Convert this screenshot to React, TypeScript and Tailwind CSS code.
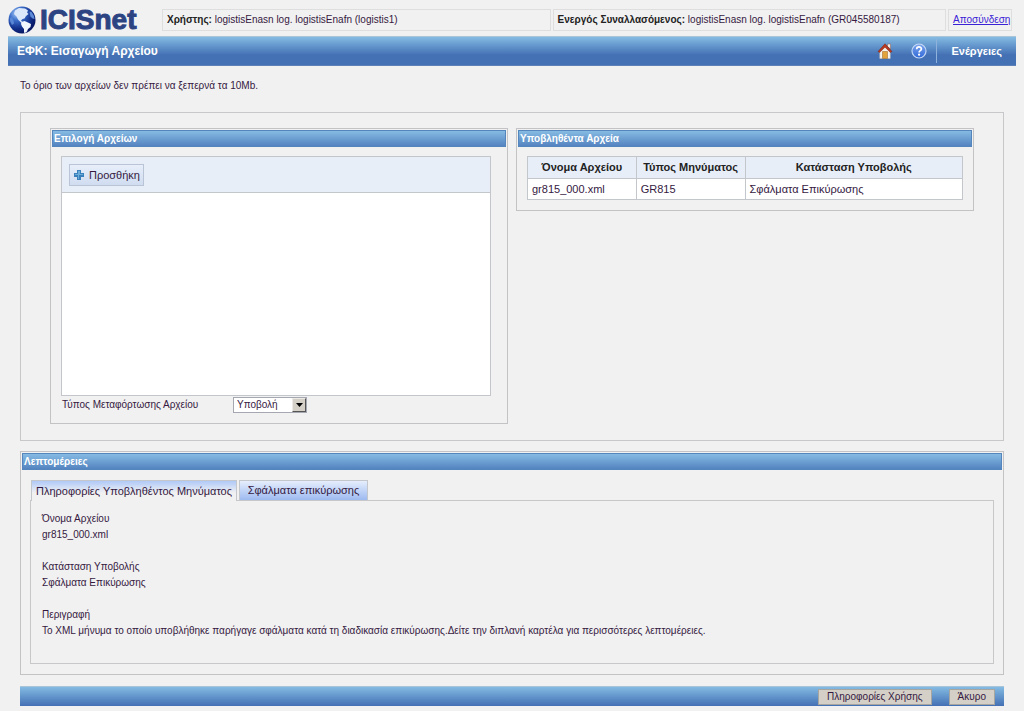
import { useState, type ReactNode } from "react";

const files = [
  { name: "gr815_000.xml", type: "GR815", status: "Σφάλματα Επικύρωσης" },
];

const details = [
  { label: "Όνομα Αρχείου", value: "gr815_000.xml" },
  { label: "Κατάσταση Υποβολής", value: "Σφάλματα Επικύρωσης" },
  {
    label: "Περιγραφή",
    value:
      "Το XML μήνυμα το οποίο υποβλήθηκε παρήγαγε σφάλματα κατά τη διαδικασία επικύρωσης.Δείτε την διπλανή καρτέλα για περισσότερες λεπτομέρειες.",
  },
];

function Globe() {
  return (
    <svg width="28" height="28" viewBox="0 0 28 28" aria-hidden="true">
      <defs>
        <radialGradient id="sea" cx="0.3" cy="0.25" r="0.75">
          <stop offset="0" stopColor="#a9c8f5" />
          <stop offset="0.35" stopColor="#3c6fcb" />
          <stop offset="0.75" stopColor="#12308c" />
          <stop offset="1" stopColor="#0a1a66" />
        </radialGradient>
        <clipPath id="ball">
          <circle cx="14" cy="14" r="13.5" />
        </clipPath>
      </defs>
      <circle cx="14" cy="14" r="13.5" fill="url(#sea)" />
      <g clipPath="url(#ball)">
        <path
          d="M7 4.500 11 2l6 .5 3 2-1 2 1.500 1.500-2.500 2-1.500 2.500-2 .5-1.500 1.500 1.500 1.500 1 1-2.500-.5-3-3-1.500-3L6 8z"
          fill="#dbe8fb"
        />
        <path
          d="M13.500 16l3-1 3.500 1.500 3 1.500-.5 3-2.500 2-1 2.500-2 1.500-1-.5v-3.500l-2-2.500-1-2.500z"
          fill="#f1f6fd"
        />
        <path d="M21.500 5.500l2 .5 2.500 4 .5 3-2-.5-2-2-.5-2z" fill="#5e8bd8" />
        <path d="M2 12l1.500-1 2 3 .5 3.500-2 1.500-2-4z" fill="#5a86d6" />
      </g>
    </svg>
  );
}

function HomeIcon() {
  return (
    <svg width="16" height="16" viewBox="0 0 16 16" aria-hidden="true">
      <path d="M10.500 1h3v5l-3-2.500z" fill="#f3ede6" stroke="#8d5a4a" strokeWidth="0.500" />
      <path d="M2.800 7.500 8 2.500l5.200 5v8H2.800z" fill="#f7f4ec" stroke="#cfc3b0" strokeWidth="0.500" />
      <path d="M1 8.500 8 .8l7 7.700-1.600 1L8 4.200 2.600 9.500z" fill="#b8391f" stroke="#7c2413" strokeWidth="0.500" />
      <path d="M5.500 8.500h5v7h-5z" fill="#e2a23c" stroke="#9a5f1c" strokeWidth="0.500" />
    </svg>
  );
}

function HelpIcon() {
  return (
    <svg width="16" height="16" viewBox="0 0 16 16" aria-hidden="true">
      <defs>
        <linearGradient id="help" x1="0" y1="0" x2="0" y2="1">
          <stop offset="0" stopColor="#7ea6ee" />
          <stop offset="1" stopColor="#2f68d8" />
        </linearGradient>
      </defs>
      <circle cx="8" cy="8" r="7" fill="url(#help)" stroke="#c4d8f5" strokeWidth="1.200" />
      <path d="M5.700 6.200c0-3 4.700-2.900 4.700-.2 0 1.700-2.300 1.700-2.300 3.500" fill="none" stroke="#fff" strokeWidth="1.700" />
      <circle cx="8.100" cy="11.700" r="1.100" fill="#fff" />
    </svg>
  );
}

function PlusIcon() {
  return (
    <svg width="12" height="12" viewBox="0 0 12 12" shapeRendering="crispEdges" aria-hidden="true">
      <path d="M4 1h4v3h3v4H8v3H4V8H1V4h3z" fill="#3b82bd" />
      <path d="M5 2h2v3h3v1H6v4H5V6H2V5h3z" fill="#6cacd9" />
    </svg>
  );
}

function Panel({ title, children }: { title: string; children: ReactNode }) {
  return (
    <section className="border border-[#c3c3c6] p-px">
      <h2 className="h-[17px] border border-[#5585bd] bg-linear-to-b from-[#86bbe3] to-[#5484c0] px-px text-[10px] leading-4 font-bold text-white">
        {title}
      </h2>
      {children}
    </section>
  );
}

export default function App() {
  const [tab, setTab] = useState("info");
  const activeTab = "bg-linear-to-b from-[#b0c9f7] to-[#f1f1f1] to-60% h-[21px] -mb-px";
  const idleTab = "bg-linear-to-b from-[#e6eefc] to-[#9dbaf0] h-5";

  return (
    <div className="bg-[#f1f1f1] px-2 pb-[5px] font-['Liberation_Sans',Arial,sans-serif] text-[10px] text-[#35193f]">
      <header className="flex h-9 items-center gap-0.5 pt-1 pr-1">
        <div className="flex w-[152px] shrink-0 items-center gap-1">
          <Globe />
          <span className="text-[28px] leading-8 font-bold text-[#2d4483] [-webkit-text-stroke:1px_#2d4483]">ICISnet</span>
        </div>
        <div className="h-[22px] grow-[389] basis-0 border border-[#dedede] px-1 leading-5">
          <b className="text-[#222]">Χρήστης:</b> logistisEnasn log. logistisEnafn (logistis1)
        </div>
        <div className="h-[22px] grow-[394] basis-0 border border-[#dedede] px-1 leading-5">
          <b className="text-[#222]">Ενεργός Συναλλασόμενος:</b> logistisEnasn log. logistisEnafn (GR045580187)
        </div>
        <div className="h-[22px] w-16 border border-[#dedede] px-1 leading-5">
          <a href="#" className="text-[#3a22d6] underline">
            Αποσύνδεση
          </a>
        </div>
      </header>

      <nav className="flex h-[30px] items-center border-t border-b border-t-[#a9c4d8] border-b-[#5f7fb8] bg-linear-to-b from-[#84bbe2] to-[#4470b4] to-65% pr-3.5 pl-[9px] text-white">
        <h1 className="flex-1 text-xs font-bold">ΕΦΚ: Εισαγωγή Αρχείου</h1>
        <button aria-label="Αρχική" className="mr-[18px]">
          <HomeIcon />
        </button>
        <button aria-label="Βοήθεια" className="mr-[9px]">
          <HelpIcon />
        </button>
        <div className="h-6 border-l border-[#8fb2dc]" />
        <button className="pl-3.5 text-[11px] font-bold">Ενέργειες</button>
      </nav>

      <main className="px-3">
        <p className="py-3 leading-[15px]">Το όριο των αρχείων δεν πρέπει να ξεπερνά τα 10Mb.</p>

        <div className="mt-[7px] mb-2.5 grid grid-cols-2 items-start gap-2 border border-[#c8c8ca] px-[29px] pt-[15px] pb-4">
          <Panel title="Επιλογή Αρχείων">
            <div className="px-[9px] py-[9px]">
              <div className="mr-1.5 h-60 border border-[#c3c6cb] bg-white">
                <div className="h-9 border-b border-[#c3c6cb] bg-[#e8eef8] px-[7px] pt-[7px]">
                  <button className="flex h-[22px] items-center gap-1 border border-[#b9c4d6] bg-linear-to-b from-[#e8effa] to-[#d0dcf0] px-[3px] text-[11px]">
                    <PlusIcon />
                    Προσθήκη
                  </button>
                </div>
              </div>
              <div className="flex h-[17px] items-center">
                <label htmlFor="upload-type" className="w-[172px] pl-px">
                  Τύπος Μεταφόρτωσης Αρχείου
                </label>
                <div className="grid h-4 w-[74px] border border-[#a5a8b0] bg-white">
                  <select id="upload-type" className="col-start-1 row-start-1 appearance-none pl-[3px] leading-[14px]">
                    <option>Υποβολή</option>
                  </select>
                  <span className="pointer-events-none col-start-1 row-start-1 flex w-3.5 items-center justify-center justify-self-end border border-t-[#eceae6] border-r-[#555] border-b-[#555] border-l-[#eceae6] bg-[#d4d0c8]">
                    <svg width="7" height="4" viewBox="0 0 7 4" aria-hidden="true">
                      <path d="M0 0h7L3.500 4z" fill="#000" />
                    </svg>
                  </span>
                </div>
              </div>
            </div>
          </Panel>

          <Panel title="Υποβληθέντα Αρχεία">
            <div className="px-[9px] py-[9px]">
              <table className="w-full table-fixed border-collapse bg-white text-[11px]">
                <thead>
                  <tr className="h-[22px] bg-[#e8eef8] text-[#222]">
                    <th className="w-1/4 border border-[#c3c6cb] whitespace-nowrap">Όνομα Αρχείου</th>
                    <th className="w-1/4 border border-[#c3c6cb] whitespace-nowrap">Τύπος Μηνύματος</th>
                    <th className="border border-[#c3c6cb]">Κατάσταση Υποβολής</th>
                  </tr>
                </thead>
                <tbody>
                  {files.map((f) => (
                    <tr key={f.name} className="h-[21px]">
                      <td className="border border-[#c3c6cb] px-1">{f.name}</td>
                      <td className="border border-[#c3c6cb] px-1">{f.type}</td>
                      <td className="border border-[#c3c6cb] px-1">{f.status}</td>
                    </tr>
                  ))}
                </tbody>
              </table>
            </div>
          </Panel>
        </div>

        <Panel title="Λεπτομέρειες">
          <div className="px-2 pt-2.5 pb-[9px]">
            <div role="tablist" className="flex items-end gap-0.5 pl-px text-[11px]">
              <button
                role="tab"
                aria-selected={tab === "info"}
                onClick={() => setTab("info")}
                className={`w-[206px] border border-b-0 border-[#c3c6cb] ${tab === "info" ? activeTab : idleTab}`}
              >
                Πληροφορίες Υποβληθέντος Μηνύματος
              </button>
              <button
                role="tab"
                aria-selected={tab === "errors"}
                onClick={() => setTab("errors")}
                className={`w-[129px] border border-b-0 border-[#c3c6cb] ${tab === "errors" ? activeTab : idleTab}`}
              >
                Σφάλματα επικύρωσης
              </button>
            </div>
            <dl className="h-[164px] border border-[#c8c8ca] px-[11px] pt-2.5 leading-4">
              {details.map((d) => (
                <div key={d.label} className="mb-4">
                  <dt>{d.label}</dt>
                  <dd>{d.value}</dd>
                </div>
              ))}
            </dl>
          </div>
        </Panel>

        <footer className="mt-[11px] flex h-5 items-center justify-end gap-[17px] border-t border-t-[#a9c4d8] bg-linear-to-b from-[#84bbe2] to-[#4470b4] pr-[9px]">
          <button className="h-4 border border-[#a7a59f] bg-[#d4d0c8] px-2 leading-[14px]">Πληροφορίες Χρήσης</button>
          <button className="h-4 border border-[#a7a59f] bg-[#d4d0c8] px-2 leading-[14px]">Άκυρο</button>
        </footer>
      </main>
    </div>
  );
}
